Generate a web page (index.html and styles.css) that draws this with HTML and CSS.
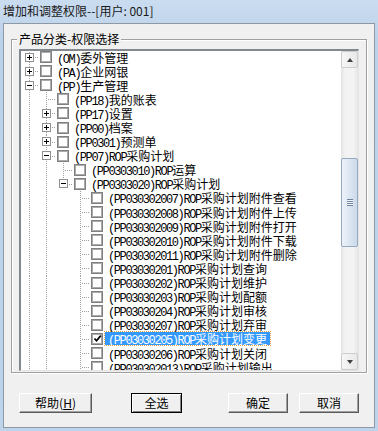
FILE: index.html
```html
<!DOCTYPE html>
<html>
<head>
  <meta charset="UTF-8">
  <title>增加和调整权限</title>
  <link rel="stylesheet" href="styles.css">
</head>
<body>
  <div class="window">
    <div class="title-bar">增加和调整权限--[用户: 001]</div>

    <div class="dialog">
      <fieldset class="group">
        <legend>产品分类-权限选择</legend>

        <div class="tree">
          <div class="tree-body">
            <!-- 第一级 -->
            <div class="node">
              <span class="guide tee"><i class="exp plus"></i></span>
              <span class="check"></span>
              <span class="label"><span class="code">(OM)</span>委外管理</span>
            </div>
            <div class="node">
              <span class="guide tee"><i class="exp plus"></i></span>
              <span class="check"></span>
              <span class="label"><span class="code">(PA)</span>企业网银</span>
            </div>
            <div class="node">
              <span class="guide tee"><i class="exp"></i></span>
              <span class="check"></span>
              <span class="label"><span class="code">(PP)</span>生产管理</span>
            </div>

            <!-- 生产管理 -->
            <div class="node">
              <span class="guide line"></span><span class="guide tee"></span>
              <span class="check"></span>
              <span class="label"><span class="code">(PP18)</span>我的账表</span>
            </div>
            <div class="node">
              <span class="guide line"></span><span class="guide tee"><i class="exp plus"></i></span>
              <span class="check"></span>
              <span class="label"><span class="code">(PP17)</span>设置</span>
            </div>
            <div class="node">
              <span class="guide line"></span><span class="guide tee"><i class="exp plus"></i></span>
              <span class="check"></span>
              <span class="label"><span class="code">(PP00)</span>档案</span>
            </div>
            <div class="node">
              <span class="guide line"></span><span class="guide tee"><i class="exp plus"></i></span>
              <span class="check"></span>
              <span class="label"><span class="code">(PP0301)</span>预测单</span>
            </div>
            <div class="node">
              <span class="guide line"></span><span class="guide tee"><i class="exp"></i></span>
              <span class="check"></span>
              <span class="label"><span class="code">(PP07)ROP</span>采购计划</span>
            </div>

            <!-- ROP采购计划 -->
            <div class="node">
              <span class="guide line"></span><span class="guide line"></span><span class="guide tee"></span>
              <span class="check"></span>
              <span class="label"><span class="code">(PP0303010)ROP</span>运算</span>
            </div>
            <div class="node">
              <span class="guide line"></span><span class="guide line"></span><span class="guide end"><i class="exp"></i></span>
              <span class="check"></span>
              <span class="label"><span class="code">(PP0303020)ROP</span>采购计划</span>
            </div>

            <!-- 第四级 -->
            <div class="node">
              <span class="guide line"></span><span class="guide line"></span><span class="guide"></span><span class="guide tee"></span>
              <span class="check"></span>
              <span class="label"><span class="code">(PP030302007)ROP</span>采购计划附件查看</span>
            </div>
            <div class="node">
              <span class="guide line"></span><span class="guide line"></span><span class="guide"></span><span class="guide tee"></span>
              <span class="check"></span>
              <span class="label"><span class="code">(PP030302008)ROP</span>采购计划附件上传</span>
            </div>
            <div class="node">
              <span class="guide line"></span><span class="guide line"></span><span class="guide"></span><span class="guide tee"></span>
              <span class="check"></span>
              <span class="label"><span class="code">(PP030302009)ROP</span>采购计划附件打开</span>
            </div>
            <div class="node">
              <span class="guide line"></span><span class="guide line"></span><span class="guide"></span><span class="guide tee"></span>
              <span class="check"></span>
              <span class="label"><span class="code">(PP030302010)ROP</span>采购计划附件下载</span>
            </div>
            <div class="node">
              <span class="guide line"></span><span class="guide line"></span><span class="guide"></span><span class="guide tee"></span>
              <span class="check"></span>
              <span class="label"><span class="code">(PP030302011)ROP</span>采购计划附件删除</span>
            </div>
            <div class="node">
              <span class="guide line"></span><span class="guide line"></span><span class="guide"></span><span class="guide tee"></span>
              <span class="check"></span>
              <span class="label"><span class="code">(PP03030201)ROP</span>采购计划查询</span>
            </div>
            <div class="node">
              <span class="guide line"></span><span class="guide line"></span><span class="guide"></span><span class="guide tee"></span>
              <span class="check"></span>
              <span class="label"><span class="code">(PP03030202)ROP</span>采购计划维护</span>
            </div>
            <div class="node">
              <span class="guide line"></span><span class="guide line"></span><span class="guide"></span><span class="guide tee"></span>
              <span class="check"></span>
              <span class="label"><span class="code">(PP03030203)ROP</span>采购计划配额</span>
            </div>
            <div class="node">
              <span class="guide line"></span><span class="guide line"></span><span class="guide"></span><span class="guide tee"></span>
              <span class="check"></span>
              <span class="label"><span class="code">(PP03030204)ROP</span>采购计划审核</span>
            </div>
            <div class="node">
              <span class="guide line"></span><span class="guide line"></span><span class="guide"></span><span class="guide tee"></span>
              <span class="check"></span>
              <span class="label"><span class="code">(PP03030207)ROP</span>采购计划弃审</span>
            </div>
            <div class="node">
              <span class="guide line"></span><span class="guide line"></span><span class="guide"></span><span class="guide tee"></span>
              <span class="check checked"><svg width="9" height="9" viewBox="0 0 9 9"><path d="M1.5 4.5 L3.5 6.8 L7.8 1.6" fill="none" stroke="#000" stroke-width="1.7"/></svg></span>
              <span class="label selected"><span class="code">(PP03030205)ROP</span>采购计划变更</span>
            </div>
            <div class="node">
              <span class="guide line"></span><span class="guide line"></span><span class="guide"></span><span class="guide tee"></span>
              <span class="check"></span>
              <span class="label"><span class="code">(PP03030206)ROP</span>采购计划关闭</span>
            </div>
            <div class="node">
              <span class="guide line"></span><span class="guide line"></span><span class="guide"></span><span class="guide tee"></span>
              <span class="check"></span>
              <span class="label"><span class="code">(PP030302013)ROP</span>采购计划输出</span>
            </div>
          </div>

          <div class="scrollbar">
            <div class="sb-btn up"></div>
            <div class="sb-track"><div class="sb-thumb"></div></div>
            <div class="sb-btn down"></div>
          </div>
        </div>
      </fieldset>

      <div class="button-row">
        <button class="btn btn-help">帮助(<u>H</u>)</button>
        <button class="btn btn-all">全选</button>
        <button class="btn btn-ok">确定</button>
        <button class="btn btn-cancel">取消</button>
      </div>
    </div>
  </div>
</body>
</html>
```

FILE: styles.css
```css
body {
  margin: 0;
  font-family: "Noto Sans CJK SC", "Noto Sans", sans-serif;
  font-size: 12px;
  color: #000;
}
.window {
  width: 378px;
  height: 431px;
  box-sizing: border-box;
  padding: 0 3px 3px;
  display: flex;
  flex-direction: column;
  background: linear-gradient(#cadcf0, #bcd2ea 40px, #bed4eb);
}
.title-bar {
  height: 23px;
  line-height: 22px;
  color: #1a1a1a;
  white-space: nowrap;
}
.dialog {
  flex: 1;
  display: flex;
  flex-direction: column;
  background-color: #f0f0f0;
  border: 1px solid #8e99a6;
}

/* 分组框 */
.group {
  margin: 8px 7px 0;
  padding: 3px 7px 1px;
  border: 1px solid #a0a0a0;
  box-shadow: inset 1px 1px 0 #fff, 1px 1px 0 #fff;
  min-width: 0;
}
.group legend {
  padding: 0 2px;
  margin-left: -2px;
  line-height: 14px;
  background-color: #f0f0f0;
}

/* 树 */
.tree {
  height: 322px;
  display: flex;
  box-sizing: border-box;
  border-style: solid;
  border-width: 2px 1px 1px 2px;
  border-color: #828790 #e3e3e3 #e3e3e3 #828790;
  background-color: #fff;
}
.tree-body {
  flex: 1;
  overflow: hidden;
  margin-top: -1px;
}
.node {
  display: flex;
  align-items: center;
  height: 14.1px;
  white-space: nowrap;
}
.guide {
  flex: none;
  width: 17px;
  height: 100%;
  display: flex;
  align-items: center;
  justify-content: center;
}
.guide.line {
  background: repeating-linear-gradient(to bottom, #a0a0a0 0 1px, transparent 1px 2px) 8px 0 / 1px 100% no-repeat;
}
.guide.tee {
  background:
    repeating-linear-gradient(to right, #a0a0a0 0 1px, transparent 1px 2px) 10px 7px / 8px 1px no-repeat,
    repeating-linear-gradient(to bottom, #a0a0a0 0 1px, transparent 1px 2px) 8px 0 / 1px 100% no-repeat;
}
.guide.end {
  background:
    repeating-linear-gradient(to right, #a0a0a0 0 1px, transparent 1px 2px) 10px 7px / 8px 1px no-repeat,
    repeating-linear-gradient(to bottom, #a0a0a0 0 1px, transparent 1px 2px) 8px 0 / 1px 7px no-repeat;
}
.exp {
  width: 9px;
  height: 9px;
  box-sizing: border-box;
  border: 1px solid #919191;
  background:
    linear-gradient(#000, #000) center / 5px 1px no-repeat,
    #fff;
}
.exp.plus {
  background:
    linear-gradient(#000, #000) center / 5px 1px no-repeat,
    linear-gradient(#000, #000) center / 1px 5px no-repeat,
    #fff;
}
.check {
  flex: none;
  width: 12px;
  height: 12px;
  box-sizing: border-box;
  margin-left: 2px;
  border: 1px solid #7f7f7f;
  box-shadow: inset 0 0 0 1px #ababab;
  background-color: #fff;
  display: flex;
  align-items: center;
  justify-content: center;
}
.label {
  margin-left: 2px;
  padding: 0 3px;
  line-height: 13px;
  height: 13px;
  font-size: 12px;
}
.code {
  font-family: "Liberation Mono", monospace;
  font-size: 12px;
  letter-spacing: -1.4px;
}
.label.selected {
  background-color: #3399ff;
  color: #fff;
  outline: 1px dotted #e8a040;
}

/* 滚动条 */
.scrollbar {
  flex: none;
  width: 17px;
  display: flex;
  flex-direction: column;
  background: linear-gradient(to right, #e4e4e4, #f3f3f3 25%, #f3f3f3 75%, #e6e6e6);
}
.sb-btn {
  height: 17px;
  box-sizing: border-box;
  border: 1px solid #cdcdcd;
  border-radius: 2px;
  background: linear-gradient(to right, #f6f6f6, #e8e8e8);
  display: flex;
  align-items: center;
  justify-content: center;
}
.sb-btn::before {
  content: "";
  border-left: 3.5px solid transparent;
  border-right: 3.5px solid transparent;
}
.sb-btn.up::before {
  border-bottom: 4px solid #404040;
}
.sb-btn.down::before {
  border-top: 4px solid #404040;
}
.sb-track {
  flex: 1;
}
.sb-thumb {
  margin-top: 90px;
  height: 89px;
  box-sizing: border-box;
  border: 1px solid #95a9c0;
  border-radius: 2px;
  background: linear-gradient(to right, #eef3f9, #dce6f2 50%, #cbd9ea);
  display: flex;
  align-items: center;
  justify-content: center;
}
.sb-thumb::before {
  content: "";
  width: 6px;
  height: 7px;
  background: repeating-linear-gradient(to bottom, #6f8299 0 1px, #f4f8fc 1px 2px);
}

/* 按钮 */
.button-row {
  display: flex;
  margin-top: 20px;
  padding-left: 15px;
}
.btn {
  height: 20px;
  padding: 0;
  font-family: "Noto Sans CJK SC", sans-serif;
  font-size: 12px;
  line-height: 16px;
  color: #000;
  background-color: #f0f0f0;
  border-style: solid;
  border-width: 1px;
  border-color: #fff #5a5a5a #5a5a5a #fff;
  box-shadow: inset -1px -1px 0 #a0a0a0;
}
.btn-help {
  width: 73px;
}
.btn-all {
  width: 51px;
  margin-left: 39px;
  border-color: #000;
  box-shadow: inset 1px 1px 0 #fff, inset -1px -1px 0 #808080;
}
.btn-ok {
  width: 60px;
  margin-left: 46px;
}
.btn-cancel {
  width: 60px;
  margin-left: 11px;
}
```
